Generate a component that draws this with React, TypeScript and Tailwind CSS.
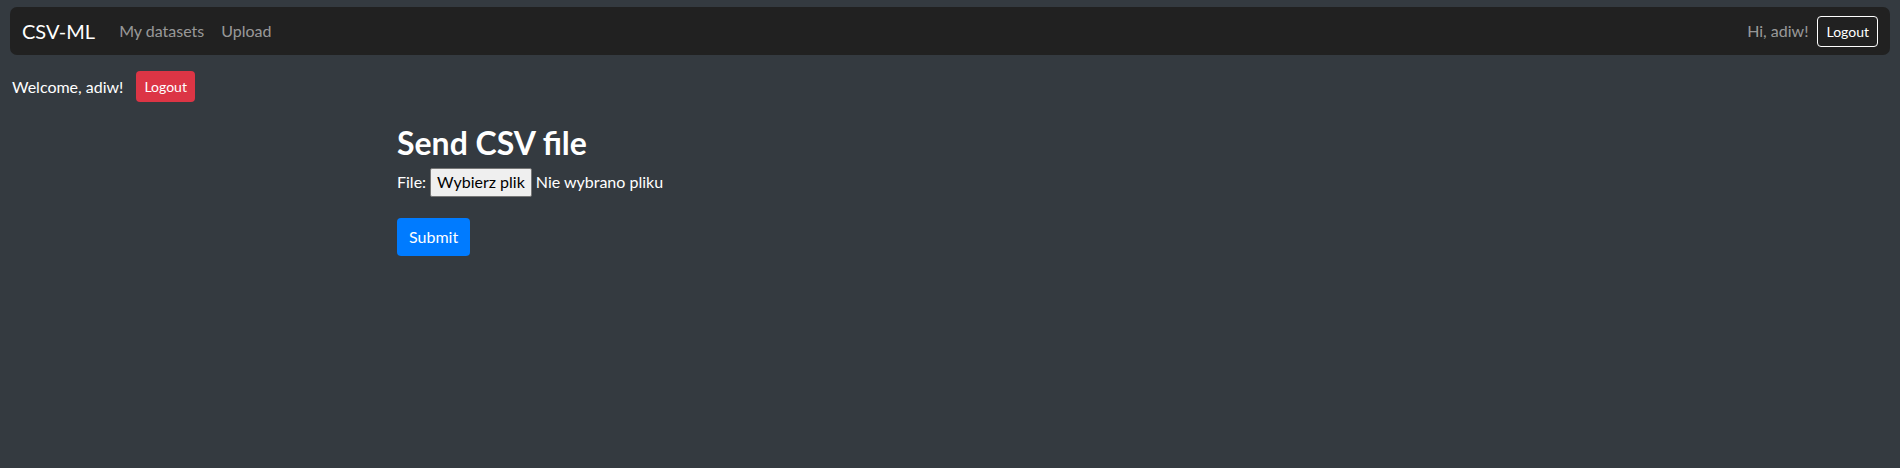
export default function App() {
  return (
    <div className="min-h-[468px] bg-[#343a40] text-white font-['Segoe_UI','Lato',sans-serif] text-[16px]">
      {/* Top navbar */}
      <nav className="mx-[10px] pt-[7px]">
        <div className="flex h-[48px] items-center justify-between rounded-[7px] bg-[#212121] pl-[12px] pr-[12px]">
          <div className="flex items-center">
            <span className="text-[20px] text-white">CSV-ML</span>
            <div className="ml-[24px] flex gap-[17px] text-[rgba(255,255,255,0.55)]">
              <span>My datasets</span>
              <span>Upload</span>
            </div>
          </div>
          <div className="flex items-center gap-[9px]">
            <span className="text-[rgba(255,255,255,0.55)]">Hi, adiw!</span>
            <button className="h-[31px] rounded-[4px] border border-white px-[8px] text-[14px] text-white">
              Logout
            </button>
          </div>
        </div>
      </nav>

      {/* Welcome */}
      <div className="mt-[16px] flex items-center gap-[13px] pl-[12px]">
        <span>Welcome, adiw!</span>
        <button className="h-[31px] rounded-[4px] bg-[#dc3545] px-[8px] text-[14px] text-white">Logout</button>
      </div>

      {/* Upload form */}
      <div className="mx-auto max-w-[1140px] px-[17px] pt-[22px]">
        <h2 className="text-[32px] font-bold leading-[1.2] mb-[4px]">Send CSV file</h2>
        <form>
          <div className="flex h-[32px] items-center gap-[4px]">
            <span>File:</span>
            <button
              type="button"
              className="inline-flex h-[29px] items-center rounded-[2px] border border-[#767676] bg-[#efefef] px-[6px] text-[16px] text-black"
            >
              Wybierz plik
            </button>
            <span>Nie wybrano pliku</span>
          </div>
          <button
            type="button"
            className="mt-[20px] h-[38px] rounded-[4px] bg-[#007bff] px-[12px] text-white"
          >
            Submit
          </button>
        </form>
      </div>
    </div>
  );
}
